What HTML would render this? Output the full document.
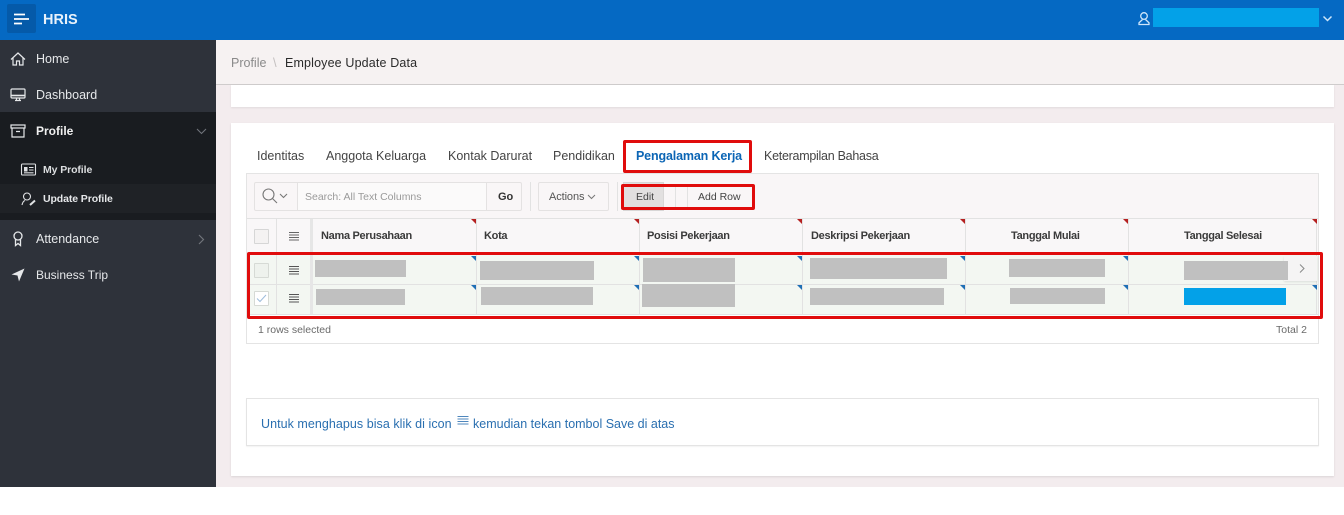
<!DOCTYPE html>
<html><head><meta charset="utf-8"><style>
*{box-sizing:border-box}
html,body{margin:0;padding:0;width:1344px;height:515px;overflow:hidden;background:#fff;font-family:"Liberation Sans",sans-serif}
.a{position:absolute}
.t{position:absolute;white-space:nowrap;line-height:16px}
.g{position:absolute;background:#c0c0c0}
.r{position:absolute;border:3px solid #e00c0c;border-radius:2px}
.nav{color:#e6e8ea;font-size:12.5px}
.tab{color:#444;font-size:12.5px;top:148px}
.th{color:#3a3a3a;font-size:11px;font-weight:bold;top:228px;letter-spacing:-.3px}
.v{position:absolute;width:1px;background:#e2e2e2}
.h{position:absolute;height:1px;background:#e2e2e2}
.tr{position:absolute;width:0;height:0;border-top:5px solid #b52020;border-left:5px solid transparent}
.tb{position:absolute;width:0;height:0;border-top:5px solid #1f6fb5;border-left:5px solid transparent}
svg{position:absolute;overflow:visible}
</style></head><body>
<div class="a" style="left:0;top:0;width:1344px;height:40px;background:#0569c3"></div>
<div class="a" style="left:7px;top:4px;width:29px;height:29px;background:#055aa9;border-radius:2px"></div>
<svg style="left:14px;top:13px" width="16" height="11"><path d="M0 1.500H11M0 6H15M0 10.500H8" stroke="#fff" stroke-width="1.700" fill="none"/></svg>
<div class="t" style="left:43px;top:12px;color:#e8f2fb;font-size:14.5px;font-weight:bold">HRIS</div>
<svg style="left:1138px;top:12px" width="12" height="13" fill="none" stroke="#cfe6fa" stroke-width="1.300"><circle cx="6" cy="4" r="3.300"/><path d="M4.500 7.500L1 10.800V12.500H11V10.800L7.500 7.500"/></svg>
<div class="a" style="left:1153px;top:8px;width:166px;height:19px;background:#03a1e8"></div>
<svg style="left:1323px;top:16px" width="9" height="6" fill="none" stroke="#cfe6fa" stroke-width="1.500"><path d="M.5 .5L4.500 4.500L8.500 .5"/></svg>

<div class="a" style="left:0;top:40px;width:216px;height:447px;background:#2e323a"></div>
<div class="a" style="left:0;top:112px;width:216px;height:108px;background:#191c20"></div>
<div class="a" style="left:0;top:184px;width:216px;height:29px;background:#1f2226"></div>

<svg style="left:10px;top:52px" width="16" height="14" fill="none" stroke="#e6e8ea" stroke-width="1.200"><path d="M1 7.500L8 1L15 7.500M3 6V13H6.500V9H9.500V13H13V6"/></svg>
<div class="t nav" style="left:36px;top:51px">Home</div>
<svg style="left:10px;top:88px" width="16" height="14" fill="none" stroke="#e6e8ea" stroke-width="1.200"><rect x="1" y="1" width="14" height="9" rx="1"/><path d="M1 7.500H15" stroke-width="1.600"/><path d="M5 12.500H11M6.500 10V12.500M9.500 10V12.500"/></svg>
<div class="t nav" style="left:36px;top:87px">Dashboard</div>
<svg style="left:10px;top:124px" width="16" height="14" fill="none" stroke="#e6e8ea" stroke-width="1.200"><rect x="1" y="1" width="14" height="3"/><path d="M2 4V13H14V4M6 7.500H10"/></svg>
<div class="t nav" style="left:36px;top:123px;font-weight:bold;color:#f0f0f0;font-size:12px">Profile</div>
<svg style="left:196px;top:128px" width="11" height="7" fill="none" stroke="#70747a" stroke-width="1.100"><path d="M1 1L5.500 5.500L10 1"/></svg>
<svg style="left:21px;top:163px" width="15" height="13" fill="none" stroke="#e0e2e4" stroke-width="1.100"><rect x=".5" y="1" width="14" height="11" rx="1"/><rect x="3" y="4" width="3.500" height="4.500" fill="#e0e2e4" stroke="none"/><path d="M8 4.500H12.500M8 7H12.500M3 9.800H12.500"/></svg>
<div class="t" style="left:43px;top:162px;color:#dcdee0;font-size:10.5px;font-weight:bold;letter-spacing:-.1px">My Profile</div>
<svg style="left:21px;top:192px" width="16" height="14" fill="none" stroke="#e0e2e4" stroke-width="1.100"><circle cx="6" cy="4.500" r="3.500"/><path d="M1 13C1.500 10.500 2.500 9 4 8.500"/><path d="M9 13L14 8.500" stroke-width="2"/></svg>
<div class="t" style="left:43px;top:191px;color:#e6e8ea;font-size:10.5px;font-weight:bold;letter-spacing:-.1px">Update Profile</div>
<svg style="left:12px;top:231px" width="12" height="16" fill="none" stroke="#e6e8ea" stroke-width="1.300"><circle cx="6" cy="5" r="4"/><path d="M3.500 8.500V14.500L6 12.500L8.500 14.500V8.500"/></svg>
<div class="t nav" style="left:36px;top:231px">Attendance</div>
<svg style="left:198px;top:234px" width="7" height="11" fill="none" stroke="#70747a" stroke-width="1.200"><path d="M1 1L5.500 5.500L1 10"/></svg>
<svg style="left:11px;top:268px" width="14" height="14"><path d="M13.500 .5L.5 6.500L6.500 7.500L8 13.500Z" fill="#e6e8ea"/></svg>
<div class="t nav" style="left:36px;top:267px;font-size:12px">Business Trip</div>

<div class="a" style="left:216px;top:40px;width:1128px;height:447px;background:#f3ecee"></div>
<div class="a" style="left:216px;top:40px;width:1128px;height:45px;background:#f6f2f2;border-bottom:1px solid #cfcccc"></div>
<div class="t" style="left:231px;top:55px;color:#8a8a8a;font-size:12.5px">Profile</div>
<div class="t" style="left:273px;top:55px;color:#c4c0c0;font-size:13px">\</div>
<div class="t" style="left:285px;top:55px;color:#2b2b2b;font-size:12.5px;letter-spacing:.15px">Employee Update Data</div>
<div class="a" style="left:231px;top:85px;width:1103px;height:22px;background:#fff;box-shadow:0 1px 2px rgba(0,0,0,.08)"></div>
<div class="a" style="left:231px;top:123px;width:1103px;height:353px;background:#fff;box-shadow:0 1px 2px rgba(0,0,0,.1)"></div>

<div class="t tab" style="left:257px">Identitas</div>
<div class="t tab" style="left:326px">Anggota Keluarga</div>
<div class="t tab" style="left:448px">Kontak Darurat</div>
<div class="t tab" style="left:553px">Pendidikan</div>
<div class="t tab" style="left:636px;color:#0b65b5;font-weight:bold;letter-spacing:-.15px">Pengalaman Kerja</div>
<div class="t tab" style="left:764px;letter-spacing:-.27px">Keterampilan Bahasa</div>

<div class="a" style="left:246px;top:173px;width:1073px;height:171px;background:#fff;border:1px solid #e4e4e4"></div>
<div class="a" style="left:247px;top:174px;width:1071px;height:45px;background:#f9f6f7"></div>
<div class="a" style="left:254px;top:182px;width:268px;height:29px;background:#f9f6f7;border:1px solid #e4e2e2;border-radius:2px"></div>
<div class="a" style="left:297px;top:182px;width:190px;height:29px;background:#fbfafa;border:1px solid #e4e2e2"></div>
<svg style="left:262px;top:188px" width="28" height="16" fill="none" stroke="#777" stroke-width="1.100"><circle cx="6.500" cy="6.500" r="5.500"/><path d="M10.500 10.500L15 15"/><path d="M18 6L21.500 9.500L25 6"/></svg>
<div class="t" style="left:305px;top:189px;color:#9a9a9a;font-size:10.500px">Search: All Text Columns</div>
<div class="t" style="left:498px;top:189px;color:#333;font-size:11px;font-weight:bold">Go</div>
<div class="v" style="left:530px;top:182px;height:29px"></div>
<div class="a" style="left:538px;top:182px;width:71px;height:29px;background:#f9f6f7;border:1px solid #e4e2e2;border-radius:2px"></div>
<div class="t" style="left:549px;top:189px;color:#555;font-size:11px;letter-spacing:-.1px">Actions</div>
<svg style="left:587px;top:194px" width="9" height="6" fill="none" stroke="#777"><path d="M1 1L4.500 4.500L8 1"/></svg>
<div class="v" style="left:617px;top:182px;height:29px"></div>
<div class="a" style="left:623px;top:182px;width:41px;height:29px;background:#e2e0e0;border:1px solid #d8d6d6"></div>
<div class="t" style="left:636px;top:189px;color:#444;font-size:10.500px">Edit</div>
<div class="v" style="left:675px;top:186px;height:22px"></div>
<div class="v" style="left:687px;top:186px;height:22px"></div>
<div class="t" style="left:698px;top:189px;color:#444;font-size:10.500px">Add Row</div>

<div class="a" style="left:247px;top:219px;width:1071px;height:35px;background:#f9f7f8"></div>
<div class="h" style="left:247px;top:218px;width:1071px"></div>
<div class="h" style="left:247px;top:253px;width:1071px"></div>
<div class="a" style="left:247px;top:254px;width:1071px;height:60px;background:#f3f7f2"></div>
<div class="h" style="left:247px;top:284px;width:1071px"></div>
<div class="h" style="left:247px;top:314px;width:1071px"></div>
<div class="a" style="left:310px;top:219px;width:3px;height:95px;background:#e6e6e6"></div>
<div class="v" style="left:276px;top:219px;height:95px"></div>
<div class="v" style="left:476px;top:219px;height:95px"></div>
<div class="v" style="left:639px;top:219px;height:95px"></div>
<div class="v" style="left:802px;top:219px;height:95px"></div>
<div class="v" style="left:965px;top:219px;height:95px"></div>
<div class="v" style="left:1128px;top:219px;height:95px"></div>
<div class="v" style="left:1316px;top:219px;height:95px"></div>

<div class="a" style="left:254px;top:229px;width:15px;height:15px;background:#f4f2f2;border:1px solid #d6d6d6;border-radius:1px"></div>
<div class="a" style="left:254px;top:263px;width:15px;height:15px;background:#eef2ed;border:1px solid #d6dad5;border-radius:1px"></div>
<div class="a" style="left:254px;top:291px;width:15px;height:15px;background:#fff;border:1px solid #d6dad5;border-radius:1px"></div>
<svg style="left:256px;top:294px" width="11" height="9" fill="none" stroke="#9dbcdb" stroke-width="1"><path d="M1 4.500L4 7.500L10 1"/></svg>
<svg style="left:288px;top:231px" width="12" height="10" stroke="#666" stroke-width="1"><path d="M1 1.500H11M1 4H11M1 6.500H11M1 9H11"/></svg>
<svg style="left:288px;top:265px" width="12" height="10" stroke="#555" stroke-width="1"><path d="M1 1.500H11M1 4H11M1 6.500H11M1 9H11"/></svg>
<svg style="left:288px;top:293px" width="12" height="10" stroke="#555" stroke-width="1"><path d="M1 1.500H11M1 4H11M1 6.500H11M1 9H11"/></svg>

<div class="t th" style="left:321px">Nama Perusahaan</div>
<div class="t th" style="left:484px">Kota</div>
<div class="t th" style="left:647px">Posisi Pekerjaan</div>
<div class="t th" style="left:811px">Deskripsi Pekerjaan</div>
<div class="t th" style="left:1011px">Tanggal Mulai</div>
<div class="t th" style="left:1184px">Tanggal Selesai</div>

<div class="tr" style="left:471px;top:219px"></div><div class="tr" style="left:634px;top:219px"></div><div class="tr" style="left:797px;top:219px"></div><div class="tr" style="left:960px;top:219px"></div><div class="tr" style="left:1123px;top:219px"></div><div class="tr" style="left:1312px;top:219px"></div>
<div class="tb" style="left:471px;top:256px"></div><div class="tb" style="left:634px;top:256px"></div><div class="tb" style="left:797px;top:256px"></div><div class="tb" style="left:960px;top:256px"></div><div class="tb" style="left:1123px;top:256px"></div>
<div class="tb" style="left:471px;top:285px"></div><div class="tb" style="left:634px;top:285px"></div><div class="tb" style="left:797px;top:285px"></div><div class="tb" style="left:960px;top:285px"></div><div class="tb" style="left:1123px;top:285px"></div><div class="tb" style="left:1312px;top:285px"></div>

<div class="g" style="left:315px;top:260px;width:91px;height:17px"></div>
<div class="g" style="left:480px;top:261px;width:114px;height:19px"></div>
<div class="g" style="left:643px;top:258px;width:92px;height:24px"></div>
<div class="g" style="left:810px;top:258px;width:137px;height:21px"></div>
<div class="g" style="left:1009px;top:259px;width:96px;height:18px"></div>
<div class="a" style="left:1284px;top:256px;width:33px;height:25px;background:#f5f4f4;box-shadow:0 1px 2px rgba(0,0,0,.1)"></div>
<div class="g" style="left:1184px;top:261px;width:104px;height:19px"></div>
<svg style="left:1299px;top:264px" width="6" height="9" fill="none" stroke="#888" stroke-width="1"><path d="M1 .5L5 4.500L1 8.500"/></svg>
<div class="g" style="left:316px;top:289px;width:89px;height:16px"></div>
<div class="g" style="left:481px;top:287px;width:112px;height:18px"></div>
<div class="g" style="left:642px;top:284px;width:93px;height:23px"></div>
<div class="g" style="left:810px;top:288px;width:134px;height:17px"></div>
<div class="g" style="left:1010px;top:288px;width:95px;height:16px"></div>
<div class="a" style="left:1184px;top:288px;width:102px;height:17px;background:#03a1e8"></div>

<div class="t" style="left:258px;top:322px;color:#6a6a6a;font-size:10.500px">1 rows selected</div>
<div class="t" style="left:1276px;top:322px;color:#6a6a6a;font-size:10.500px">Total 2</div>

<div class="a" style="left:246px;top:398px;width:1073px;height:48px;background:#fff;border:1px solid #e4e4e4;box-shadow:0 1px 1px rgba(0,0,0,.05)"></div>
<div class="t" style="left:261px;top:416px;color:#2a6fb0;font-size:12.500px;letter-spacing:.05px">Untuk menghapus bisa klik di icon</div>
<svg style="left:457px;top:416px" width="12" height="10" stroke="#4f87bd" stroke-width="1"><path d="M.5 .5H11.500M.5 3H11.500M.5 5.500H11.500M.5 8H11.500"/></svg>
<div class="t" style="left:473px;top:416px;color:#2a6fb0;font-size:12.500px">kemudian tekan tombol Save di atas</div>

<div class="r" style="left:623px;top:140px;width:129px;height:33px"></div>
<div class="r" style="left:621px;top:184px;width:134px;height:26px"></div>
<div class="r" style="left:247px;top:252px;width:1076px;height:67px"></div>
</body></html>
